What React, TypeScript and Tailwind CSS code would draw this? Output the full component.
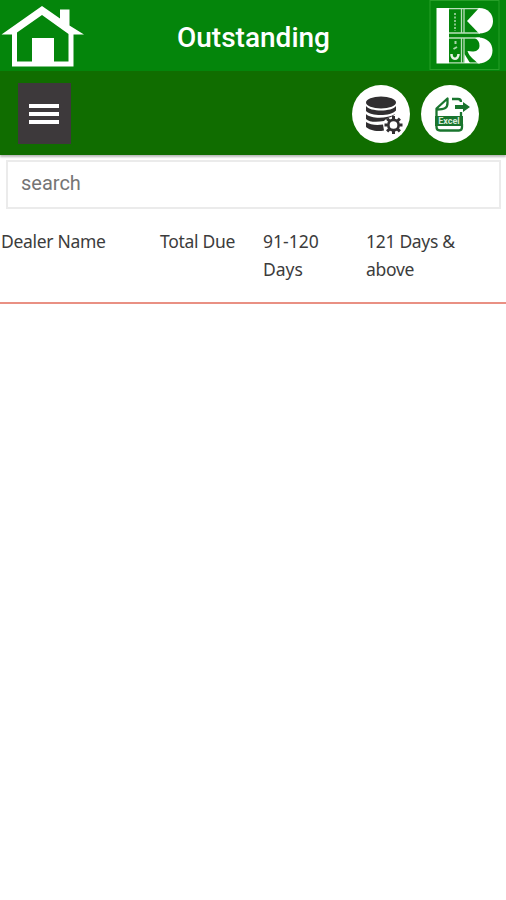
function HomeIcon() {
  return (
    <svg width="84" height="70" viewBox="0 0 84 70" fill="none" aria-label="Home">
      <path
        fill="#fff"
        fillRule="evenodd"
        d="M42 6L60 18.5V9.5H69.5V25.5L84 34.5H73.5V66.5H12V34.5H1.5ZM42 15L17 32.5V61.5H32V38H54V61.5H68.5V34Z"
      />
    </svg>
  );
}

function BrandLogo() {
  return (
    <svg width="77" height="71" viewBox="0 0 77 71" fill="none" aria-label="Logo">
      <rect x="1" y=".5" width="69" height="69" stroke="#279f28" />
      <path fill="#fff" d="M7.500 8H20V63.500H7.500Z" />
      <g stroke="#b9dfba" strokeWidth="1.300">
        <path d="M20 8.700H51M20 33H51M32.500 8.500V33M35 8.500V33" />
        <path d="M20 38H51M20 62.800H51M32.500 38V63M35 38V63" />
      </g>
      <path fill="#fff" d="M38 21L50 8C59 8 64 14 64 21C64 28 59 33.500 50 33.500Z" />
      <path fill="#fff" d="M49 37.500C58 37.500 63.500 43 63.500 50.500C63.500 58 58 63.500 49 63.500C46 60 41 58 38.500 51C44 52 50 52 50.500 46C50.500 42 49 40 46 38Z" />
      <path fill="#fff" d="M35.500 54L41 63H35.500Z" />
      <path stroke="#86c488" strokeWidth="2" strokeDasharray="2 1.500" d="M26 13V31" />
      <path stroke="#a8d6aa" strokeWidth="2" d="M26.500 41V44M24.500 49L28 47" />
      <path stroke="#e3f2e4" strokeWidth="2.500" d="M22.500 54C22 60 29.500 60.500 29.500 54" />
    </svg>
  );
}

function DatabaseIcon() {
  return (
    <svg width="58" height="58" viewBox="0 0 58 58" fill="none" aria-label="Database settings">
      <ellipse cx="29" cy="17.500" rx="15" ry="6" fill="#302e30" />
      <path fill="#302e30" d="M14 21C18 27 40 27 44 21V25.500C39 31.500 19 31.500 14 26ZM14 29C19 34 35 34 43 29C42 32 35 32 32 36C24 37.500 17 37 14 34ZM14 37C18 40 25 40.500 31 39.500L32 45.500C24 47 17 45 14 42Z" />
      <g transform="translate(41.500 40)" stroke="#302e30">
        <circle r="5.200" strokeWidth="2.700" />
        <path strokeWidth="3" d="M0-9V-6M0 6V9M-9 0H-6M6 0H9M-6.400-6.400L-4.200-4.200M4.200 4.200L6.400 6.400M-6.400 6.400L-4.200 4.200M4.200-4.200L6.400-6.400" />
      </g>
    </svg>
  );
}

function ExcelIcon() {
  return (
    <svg width="58" height="58" viewBox="0 0 58 58" fill="none" aria-label="Export to Excel">
      <g stroke="#19752e" strokeWidth="2.300" strokeLinejoin="round">
        <path d="M15.500 31V23.500L26.500 13.500V18C26.500 23.500 23 24.500 16 24.500" />
        <path d="M31 14H37Q40 14 40 17M40 27V31" />
        <path d="M15.500 39V42Q15.500 45.500 19 45.500H38Q41 45.500 41 42V39" />
        <path strokeWidth="4" d="M34 22H43" />
      </g>
      <path fill="#19752e" d="M42 17L49 22L42 27ZM14 31H42V41H14Z" />
      <text x="28" y="39" textAnchor="middle" fill="#d5e9d7" fontFamily="Roboto, sans-serif" fontWeight="700" fontSize="9">Excel</text>
    </svg>
  );
}

export default function App() {
  return (
    <div className="flex h-[900px] w-full flex-col overflow-hidden bg-white font-[Roboto,sans-serif]">
      <header className="grid h-[71px] shrink-0 grid-cols-[84px_1fr_77px] bg-[#04850b]">
        <HomeIcon />
        <h1 className="flex items-center justify-center pt-1 pr-1.5 text-[28px] font-medium text-white">
          Outstanding
        </h1>
        <BrandLogo />
      </header>
      <div className="relative flex h-[84px] shrink-0 items-center bg-[#106d00] pr-[27px] pl-[18px] shadow-[0_2px_2px_rgba(0,0,0,0.28)]">
        <button aria-label="Menu" className="flex h-[61px] w-[53px] flex-col items-center justify-center gap-1 bg-[#3d393b] pt-0.5 pr-px">
          <span className="h-1 w-[30px] bg-white" />
          <span className="h-1 w-[30px] bg-white" />
          <span className="h-1 w-[30px] bg-white" />
        </button>
        <div className="ml-auto flex gap-[11px] pt-px">
          <button className="size-[58px] rounded-full bg-white"><DatabaseIcon /></button>
          <button className="size-[58px] rounded-full bg-white"><ExcelIcon /></button>
        </div>
      </div>
      <div className="pt-[5px] pr-[5px] pl-1.5">
        <input
          placeholder="search"
          className="block h-[49px] w-full border-2 border-[#ebebeb] bg-white px-[13px] pb-[3px] text-[20px] text-[#757575] outline-none placeholder:text-[#757575]"
        />
      </div>
      <div className="grid h-[95px] shrink-0 grid-cols-[159px_104px_103px_1fr] border-b-2 border-[#e99083] pt-[18px] font-['Noto_Sans',sans-serif] text-[17.5px] leading-7 tracking-[-0.3px] text-[#3c3c3c]">
        <div className="pl-px">Dealer Name</div>
        <div className="pl-px">Total Due</div>
        <div className="tracking-normal">91-120<br />Days</div>
        <div>121 Days &amp;<br />above</div>
      </div>
    </div>
  );
}
